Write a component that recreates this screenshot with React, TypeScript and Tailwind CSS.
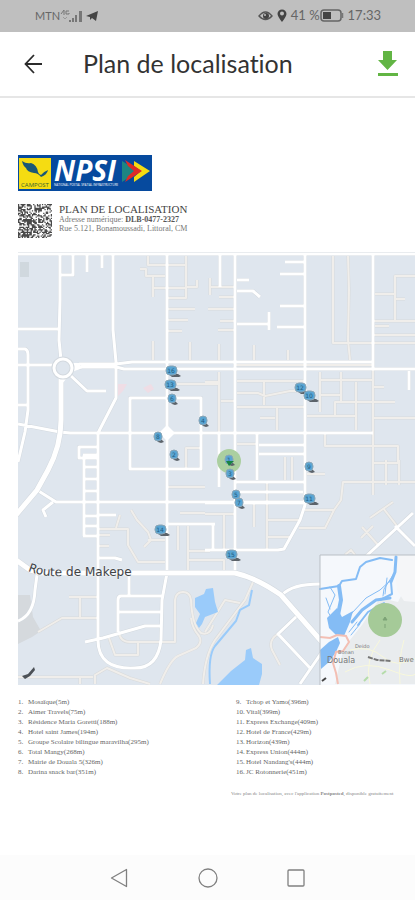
import React from "react";

const nearby = [
  "Mosaïque(5m)",
  "Aimer Travels(75m)",
  "Résidence Maria Goretti(188m)",
  "Hotel saint James(194m)",
  "Groupe Scolaire bilingue maravilha(295m)",
  "Total Mangy(268m)",
  "Mairie de Douala 5(326m)",
  "Darina snack bar(351m)",
  "Tchop et Yamo(396m)",
  "Vital(399m)",
  "Express Exchange(409m)",
  "Hotel de France(429m)",
  "Horizon(439m)",
  "Express Union(444m)",
  "Hotel Nandang's(444m)",
  "JC Rotonnerie(451m)",
];

const mainRoads = [
  "M18 254H415",
  "M60 254V300L59 340L61 360",
  "M73 255V275H60M87 255V272M102 255V268",
  "M113 254V330L116 362V398L98 433V640",
  "M167 254V573L162 600L161 640Q158 668 135 668Q98 670 98 640",
  "M18 329H59",
  "M18 349H25Q28 350 28 355V410L25 432L18 462",
  "M18 365H54",
  "M72 367L80 364H116L132 362H373",
  "M72 369L82 367H116L124 369H415",
  "M70 375L87 391H106",
  "M18 424L60 432L70 433H373",
  "M18 405H28",
  "M130 398H201V469H130Z",
  "M98 447H79V458H98",
  "M84 455V536M83 455H98M83 467H98M83 479H98M83 491H98M83 516H98M83 526H98M83 536H98",
  "M37 490L56 502H305",
  "M53 502L43 510L46 517",
  "M98 515H116M98 558H115L122 560",
  "M129 575V596M163 596H121Q118 596 118 600V632M118 612H161M85 642L103 638L145 626H161",
  "M168 524H215",
  "M235 254V572",
  "M220 254V287M237 280H249M237 291H253L260 297M237 324H269M269 312V330",
  "M285 262H304M280 274H304M280 306H304M277 327H304",
  "M305 254V505L300 520L284 549L278 550H205",
  "M373 254V369M409 371V390",
  "M257 433V480M259 445H304M259 454H304",
  "M219 433V487M235 482H305M235 492H303M205 503H305",
  "M213 523V550",
  "M282 595Q292 584 320 584",
  "M297 616L278 634L310 668M300 684L322 652",
  "M363 559L413 513M395 526L415 546",
  "M18 621Q34 615 35 590L37 575",
];

const sideRoads = [
  "M148 256V265H165M153 265H186M140 269H146V276H165M153 276V297M153 288H186M186 256V298H168M186 287H197V280",
  "M168 309H195M168 320H188M168 331H182M153 341V360M190 342V360",
  "M210 278V295M210 287H235M219 297H235M208 309H235M220 321H235M218 330H235M219 344V360",
  "M254 345V360M288 350V360M235 365H373M168 384H219",
  "M333 256V343H415M348 256L349 290L348 340L350 360",
  "M415 276H395V320M375 294H395M395 299H405M373 321H415M375 326H389M373 335H415",
  "M237 381H304M264 381V405M237 393H258L265 396L290 391H304M237 407H304M277 407V430M260 418H275",
  "M320 372V412M320 380H373M341 372V402M320 395H341M335 415V402H395M307 416H356M356 382V430M373 418H415M373 387H384",
  "M373 369V495M219 372V433M205 382H219M221 401H235",
  "M237 444H256M325 433V446H398V463H373M285 457V480M292 457V480",
  "M186 469V448H201M267 482V549M254 503V527M267 520H300M267 537H290",
  "M205 514H235M224 514V550M205 560H224V570",
  "M299 528H325L334 510M305 510H334L341 500L343 482H415M386 460V485M399 460V485M307 474H325",
  "M370 518L393 502M362 527L378 545M361 538L373 526M383 508L397 526",
  "M168 487H205M180 513H205M178 526V550M188 526V570M188 551H210M188 560H210",
  "M98 529H128V545L138 562H165M131 510L137 520L148 532L151 540L144 547M148 540H165M120 515L116 528M98 535H110M98 546H109",
  "M69 597H98M80 597V617M38 632L62 618H98M18 677H93M80 677V684",
  "M109 638L115 655H138V643M119 632Q120 642 130 642H175V600Q176 592 183 592Q190 592 191 600Q192 625 201 633Q210 636 213 625",
  "M191 618Q192 628 199 636Q203 642 196 648L178 656Q170 660 160 684",
  "M95 684V675L107 668L130 678L150 684",
  "M254 580L245 600L215 640Q205 655 203 684M205 632L225 600L240 603",
  "M278 634Q268 640 272 650L280 665",
  "M345 555L351 550L355 555",
];

const pins = [
  { x: 172, y: 371, label: "16" },
  { x: 171, y: 385, label: "13" },
  { x: 172, y: 399, label: "6" },
  { x: 203, y: 421, label: "4" },
  { x: 158, y: 437, label: "8" },
  { x: 174, y: 455, label: "2" },
  { x: 301, y: 388, label: "12" },
  { x: 310, y: 396, label: "10" },
  { x: 229, y: 460, label: "1" },
  { x: 230, y: 474, label: "3" },
  { x: 236, y: 495, label: "5" },
  { x: 239, y: 503, label: "7" },
  { x: 309, y: 467, label: "9" },
  { x: 310, y: 499, label: "11" },
  { x: 161, y: 530, label: "14" },
  { x: 232, y: 555, label: "15" },
];

const StatusBar = () => {
  return (
    <div className="flex h-8 items-center justify-between bg-[#bfbfbf] pl-[35px] pr-[34px] text-xs text-[#666666]">
      <div className="flex items-center">
        <span className="text-[11px]">MTN</span>
        <svg width="22" height="14" viewBox="0 0 22 14" fill="#777777">
          <path d="M1 5L4 1V6M6 2H9M6 2V5H9V4" stroke="#777777" fill="none" />
          <path d="M9 11h2v2h-2zM12 9h2v4h-2zM15 6h2v7h-2zM19 2h3v11h-3z" />
          <path d="M3 8L5 10L7 8" stroke="#999999" fill="none" />
        </svg>
        <svg className="ml-1" width="13" height="12" viewBox="0 0 13 12">
          <path d="M0 6L12 1L10 11L6 8L4 10V7Z" fill="#444444" />
        </svg>
      </div>
      <div className="flex items-center">
        <svg width="15" height="12" viewBox="0 0 15 12" fill="none">
          <path d="M1 6Q7.500 -2 14 6Q7.500 13 1 6Z" stroke="#555555" strokeWidth="1.400" />
          <circle cx="8" cy="6" r="3" fill="#444444" />
          <circle cx="7" cy="5" r="1" fill="#bfbfbf" />
        </svg>
        <svg className="mx-1" width="10" height="13" viewBox="0 0 10 13">
          <path
            d="M5 13Q1 8 0.500 5A4.500 4.500 0 0 1 9.500 5Q9 8 5 13ZM5 2.500A2 2 0 1 0 5 6.500A2 2 0 1 0 5 2.500Z"
            fill="#444444"
            fillRule="evenodd"
          />
        </svg>
        <span className="text-[13px]">41 %</span>
        <svg className="mr-1" width="24" height="13" viewBox="0 0 24 13">
          <rect x="1" y="1" width="20" height="11" rx="3" fill="none" stroke="#666666" strokeWidth="1.500" />
          <rect x="3" y="3" width="8" height="7" fill="#444444" />
          <path d="M22.500 4V9" stroke="#777777" strokeWidth="1.500" />
        </svg>
        <span className="text-[13px]">17:33</span>
      </div>
    </div>
  );
};

const Header = () => {
  return (
    <header className="flex h-[66px] items-center border-b-2 border-[#e6e6e6] pl-6 pr-4">
      <button type="button" aria-label="Retour">
        <svg width="19" height="20" viewBox="0 0 19 20" fill="none" stroke="#2b2b2b" strokeWidth="1.800">
          <path d="M10 1L1.500 10L10 19M1.500 10H18" />
        </svg>
      </button>
      <h1 className="ml-[40px] flex-1 text-[25px] text-[#333333] [font-variant-ligatures:none]">
        Plan de localisation
      </h1>
      <button type="button" aria-label="Télécharger">
        <svg width="22" height="26" viewBox="0 0 22 26" fill="#62b544">
          <path d="M6 0H15V9H20L10.500 19L1 9H6ZM1 22H21V25H1Z" />
        </svg>
      </button>
    </header>
  );
};

const Logo = () => {
  return (
    <svg className="block overflow-visible" width="134" height="36" viewBox="0 0 134 36">
      <rect width="134" height="36" fill="#064a9e" />
      <rect x="1" y="3" width="32" height="31" fill="#f5dc12" />
      <path
        d="M4 6Q8 9 13 8Q19 10 20 17Q21 20 23 20Q25 17 30 15Q29 20 23 22Q20 18 16 18Q9 17 8 13Q5 11 4 6Z"
        fill="#1b5876"
      />
      <text x="17" y="32" textAnchor="middle" fontSize="6" fill="#3b6330" fontFamily="Open Sans">
        CAMPOST
      </text>
      <text x="36" y="26" fontSize="28" fontWeight="bold" fontStyle="italic" fill="#ffffff" fontFamily="Open Sans">
        NPSI
      </text>
      <text x="36" y="31" fontSize="3" fill="#ffffff" fontFamily="Open Sans">
        NATIONAL POSTAL SPATIAL INFRASTRUCTURE
      </text>
      <path d="M104 6L121 16L104 27Z" fill="#1c8583" />
      <path d="M116 6L132 16L116 27V22L123 16L116 11Z" fill="#f5dc12" />
      <path d="M107 5L124 16L107 27L110 21L116 16L110 11Z" fill="#df2b27" />
    </svg>
  );
};

const QrCode = () => {
  const size = 27;
  const cells = [];
  for (let y = 0; y < size; y++) {
    for (let x = 0; x < size; x++) {
      const value = Math.sin(x * 12.9898 + y * 78.233) * 43758.5453;
      if (value - Math.floor(value) < 0.56) {
        cells.push("M" + x + " " + y + "h1v1h-1z");
      }
    }
  }
  return (
    <svg className="block shrink-0" width="34" height="34" viewBox="0 0 27 27">
      <path d={cells.join("")} fill="#4a4a4a" />
    </svg>
  );
};

const Pin = ({ x, y, label }: { x: number; y: number; label: string }) => {
  const wide = label.length > 1;
  return (
    <g transform={"translate(" + x + " " + y + ")"}>
      <path d={wide ? "M-4 3L6 3L9 5L7 6L0 6Z" : "M-2 2L4 3L6 5L3 6L0 5Z"} fill="#5c636a" />
      <rect
        x={wide ? -6 : -4}
        y="-5"
        width={wide ? 11 : 8}
        height="9"
        rx="4"
        fill="#5aa5d3"
        stroke="#8aa5b6"
      />
      <text y="2" x={wide ? -1 : 0} textAnchor="middle" fontSize="6" fill="#1f5c82" fontFamily="DejaVu Sans">
        {label}
      </text>
    </g>
  );
};

const Inset = () => {
  return (
    <g>
      <rect x="320" y="555" width="96" height="131" fill="#f5f8fc" />
      <path d="M416 588L403 592L398 602L380 598L362 625L350 640L342 655L335 684H416Z" fill="#e9ecee" />
      <path d="M393 555L416 555V602L404 601L397 590Z" fill="#f5f6f8" />
      <path
        d="M350 650Q370 645 383 657T416 658M345 672Q365 660 390 670T416 672M370 684Q364 660 380 640M400 684Q398 660 404 640"
        stroke="#f8f8dc"
        fill="none"
      />
      <g fill="none" stroke="#84bcf5" strokeLinecap="round" strokeLinejoin="round">
        <path d="M396 557L395 572L391 582" strokeWidth="3" />
        <path d="M391 582L392 594L380 600" strokeWidth="2" />
        <path d="M391 580L380 590L366 598L352 613L345 622" />
        <path d="M390 598L376 600L362 610L352 622" strokeWidth="3" />
        <path d="M384 603L368 612L358 625" strokeWidth="2" />
        <path d="M392 560L380 558L366 562L360 567L356 579L342 581L339 586L320 589" strokeWidth="2" />
        <path d="M339 586L341 600L338 615" strokeWidth="4" />
        <path d="M330 587L335 595L328 612L333 620M326 598L330 609" />
        <path d="M395 572L384 589L383 596M387 578L385 594" />
        <path d="M360 624L351 635M357 622L349 632" />
      </g>
      <path d="M337 608L342 617L353 611L350 622L344 636L337 636L329 628L327 618L331 614Z" fill="#84bcf5" />
      <path d="M320 650L329 642L338 637L340 643L336 652L329 662L321 669Z" fill="#84bcf5" />
      <path
        d="M320 637L330 638L337 635L346 636L349 642L343 651L336 652L333 663L336 673L338 684"
        fill="none"
        stroke="#f3bfb4"
        strokeWidth="2"
      />
      <circle cx="385" cy="620" r="17" fill="#a5ca98" />
      <path d="M385 617L387 620H383ZM385 624V628" fill="#7ca376" stroke="#7ca376" />
      <g fill="#777777" fontFamily="DejaVu Sans">
        <text x="327" y="663" fontSize="8">Douala</text>
        <text x="338" y="654" fontSize="5">Bonan</text>
        <text x="355" y="648" fontSize="5">Deido</text>
        <text x="399" y="662" fontSize="7">Bwe</text>
      </g>
      <path d="M368 657L377 660L391 661" stroke="#777777" strokeWidth="2" strokeDasharray="5 1" fill="none" />
      <path d="M322 681L326 678" stroke="#444444" strokeWidth="2" />
      <path d="M364 681L368 677M382 674L386 671" stroke="#b5dcaa" strokeWidth="2" />
      <path d="M320 686V555H416" fill="none" stroke="#b9bfc5" />
    </g>
  );
};

const CityMap = () => {
  return (
    <svg className="block w-full" viewBox="18 252 397 433" role="img" aria-label="Plan">
      <rect x="18" y="252" width="397" height="433" fill="#dfe6ee" />
      <path d="M18 252H415" stroke="#d9d9d9" />
      <rect x="20" y="262" width="9" height="15" fill="#d0d8de" />
      <path d="M18 595L30 595L33 617L41 631L32 637L18 644Z" fill="#d5d9dd" />
      <path d="M118 384l9 0l-4 7l-5 5zM143 388l8-4l3 5l-6 4z" fill="#efdde5" />

      <path d={sideRoads.join("")} fill="none" stroke="#d8dadb" strokeWidth="3" strokeLinejoin="round" />
      <path d={mainRoads.join("")} fill="none" stroke="#d3d9df" strokeWidth="4" strokeLinejoin="round" />
      <path d={sideRoads.join("")} fill="none" stroke="#f0eeeb" strokeWidth="2" strokeLinejoin="round" />
      <path d={mainRoads.join("")} fill="none" stroke="#ffffff" strokeWidth="3" strokeLinejoin="round" />

      <g fill="none" stroke="#d3d9df" strokeWidth="6">
        <path d="M61 378V420C61 440 56 455 48 470L37 490L16 515" />
        <path d="M16 560L30 570L40 573H235Q257 578 281 595L322 642" />
      </g>
      <g fill="none" stroke="#ffffff" strokeWidth="5">
        <path d="M61 376V420C61 440 56 455 48 470L37 490L16 515" />
        <path d="M16 560L30 570L40 573H235Q257 578 281 595L322 642" />
      </g>
      <path d="M57 373L61 385L72 372L80 369V363L70 363Z" fill="#ffffff" />
      <circle cx="63" cy="368" r="9" fill="#dfe6ee" stroke="#d3d9df" strokeWidth="5" />
      <circle cx="63" cy="368" r="9" fill="none" stroke="#ffffff" strokeWidth="3" />
      <path d="M167 425L175 433L167 441L159 433Z" fill="#ffffff" />

      <g fill="#9acbfa">
        <path d="M195 598L204 594L206 589L213 588L215 602L218 612L205 617L202 624L199 628L196 623L200 614L195 607Z" />
        <path d="M217 685L231 671L245 660L246 650L251 648L253 658L262 664L262 674L259 685Z" />
      </g>
      <path
        d="M252 590L249 605L240 610L236 621L215 646Q208 655 210 684"
        fill="none"
        stroke="#9acbfa"
        strokeWidth="2"
      />

      <circle cx="229" cy="461" r="12" fill="#abcfa0" />
      {pins.map((pin) => (
        <Pin key={pin.label} {...pin} />
      ))}
      <path d="M226 461L234 461L229 466Z" fill="#198344" />

      <path id="makepe" d="M28 571Q42 577 62 576H160" fill="none" />
      <text
        fontSize="12"
        fill="#3f4245"
        stroke="#eef2f6"
        paintOrder="stroke"
        fontFamily="DejaVu Sans"
      >
        <textPath href="#makepe">Route de Makepe</textPath>
      </text>
      <path d="M22 676L28 674L34 667L35 670L30 676L25 679Z" fill="#4c5157" />
      <Inset />
    </svg>
  );
};

const PlaceList = ({ places, start }: { places: string[]; start: number }) => {
  return (
    <ol start={start} className="text-[7px] leading-[10px] text-[#666666]">
      {places.map((place, i) => (
        <li key={place} className="flex whitespace-nowrap">
          <span className="w-[10px]">{start + i}.</span>
          <span>{place}</span>
        </li>
      ))}
    </ol>
  );
};

const App = () => {
  return (
    <div className="flex min-h-screen flex-col overflow-hidden bg-white font-['Lato',sans-serif]">
      <StatusBar />
      <Header />
      <main className="flex-1 pl-[18px] pt-[57px] font-['Liberation_Serif',serif]">
        <Logo />
        <div className="mt-[13px] flex gap-[7px]">
          <QrCode />
          <div className="whitespace-nowrap text-[8px] leading-[9px] text-[#777777]">
            <h2 className="text-[11px] leading-[11px] text-[#444444]">
              PLAN DE LOCALISATION
            </h2>
            <p>
              Adresse numérique: <b className="text-[#555555]">DLB-0477-2327</b>
            </p>
            <p>Rue 5.121, Bonamoussadi, Littoral, CM</p>
          </div>
        </div>
        <div className="mt-[14px]">
          <CityMap />
        </div>
        <div className="mt-3 grid grid-cols-[218px_1fr]">
          <PlaceList places={nearby.slice(0, 8)} start={1} />
          <PlaceList places={nearby.slice(8)} start={9} />
        </div>
        <p className="ml-[213px] mt-3 whitespace-nowrap text-[5px] leading-[10px] text-[#888888]">
          Votre plan de localisation, avec l'application <b>Postposted</b>, disponible gratuitement
        </p>
      </main>
      <nav className="flex h-[45px] items-center bg-[#fcfcfc] pl-[110px]">
        <button type="button" aria-label="Précédent">
          <svg width="18" height="20" viewBox="0 0 18 20" fill="none" stroke="#808080" strokeWidth="1.300">
            <path d="M16.500 1.500V18.500L1.500 10Z" strokeLinejoin="round" />
          </svg>
        </button>
        <button type="button" aria-label="Accueil" className="ml-[70px]">
          <svg width="20" height="20" viewBox="0 0 20 20" fill="none" stroke="#808080" strokeWidth="1.300">
            <circle cx="10" cy="10" r="9" />
          </svg>
        </button>
        <button type="button" aria-label="Applications" className="ml-[69px]">
          <svg width="18" height="18" viewBox="0 0 18 18" fill="none" stroke="#808080" strokeWidth="1.300">
            <rect x="1" y="1" width="16" height="16" rx="1" />
          </svg>
        </button>
      </nav>
    </div>
  );
};

export default App;
